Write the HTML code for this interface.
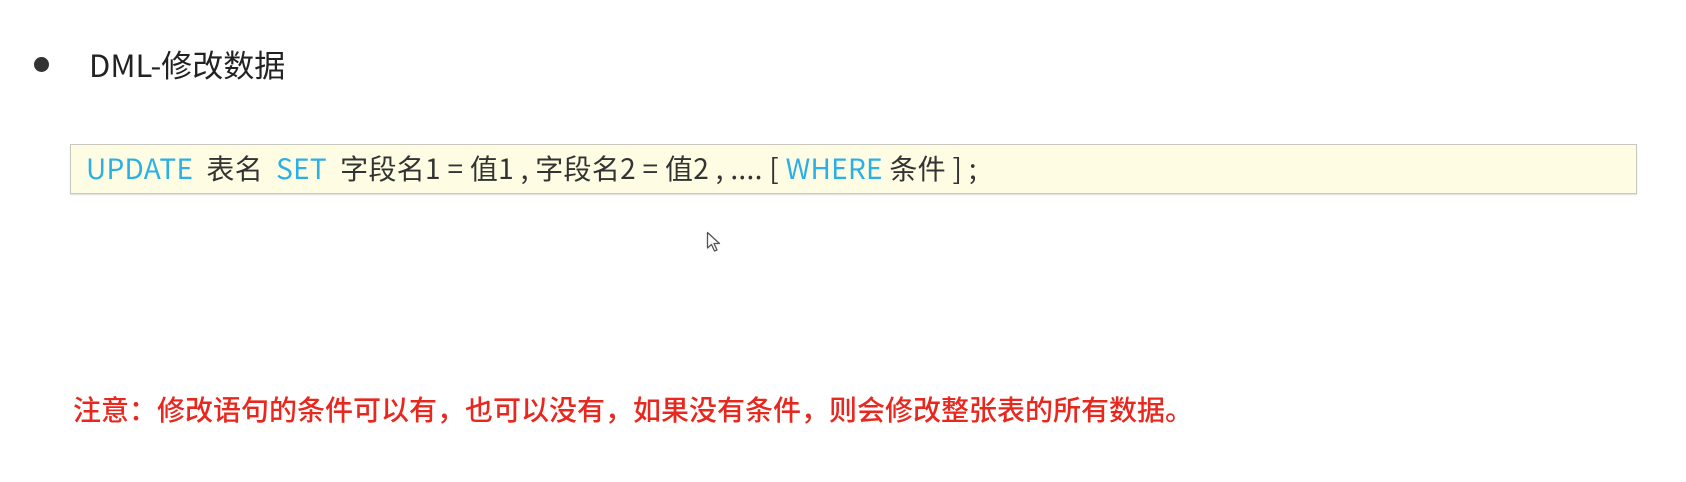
<!DOCTYPE html>
<html><head><meta charset="utf-8"><style>
html,body{margin:0;padding:0;background:#fff;width:1686px;height:482px;overflow:hidden;position:relative;font-family:"Liberation Sans","Noto Sans CJK SC",sans-serif}
.t{position:absolute;white-space:nowrap}
.bul{position:absolute;left:34px;top:57px;width:15px;height:15px;border-radius:50%;background:#333}
.title{left:89px;top:43px;font-size:31px;color:#222;font-family:"Noto Sans CJK SC",sans-serif;line-height:42px}
.box{position:absolute;left:70px;top:144px;width:1565px;height:48px;background:#fefce3;border:1px solid #c8c8c0;box-shadow:0 1px 1px #ddd}
.code{left:86px;top:149px;font-size:28px;line-height:38px;color:#333;font-family:"Noto Sans CJK SC",sans-serif;letter-spacing:0.3px}
.k{color:#2ab0e6}
.red{left:73px;top:391px;font-size:28px;line-height:36px;color:#e8281e;font-family:"Noto Sans CJK SC",sans-serif;font-weight:500}
</style></head><body>
<div class="bul"></div>
<div class="t title">DML-修改数据</div>
<div class="box"></div>
<div class="t code"><span class="k">UPDATE</span>&nbsp; 表名&nbsp; <span class="k">SET</span>&nbsp; 字段名1 = 值1 , 字段名2 = 值2 , .... [ <span class="k">WHERE</span> 条件 ] ;</div>
<div class="t red">注意：修改语句的条件可以有，也可以没有，如果没有条件，则会修改整张表的所有数据。</div>
<svg style="position:absolute;left:706px;top:231px" width="20" height="24" viewBox="0 0 20 24"><path d="M1.5 1.5 L1.5 17 L5.5 13.5 L8.5 20 L11 19 L8 12.5 L13.5 12.5 Z" fill="#fff" stroke="#555" stroke-width="1.3" stroke-linejoin="round"/></svg>
</body></html>
